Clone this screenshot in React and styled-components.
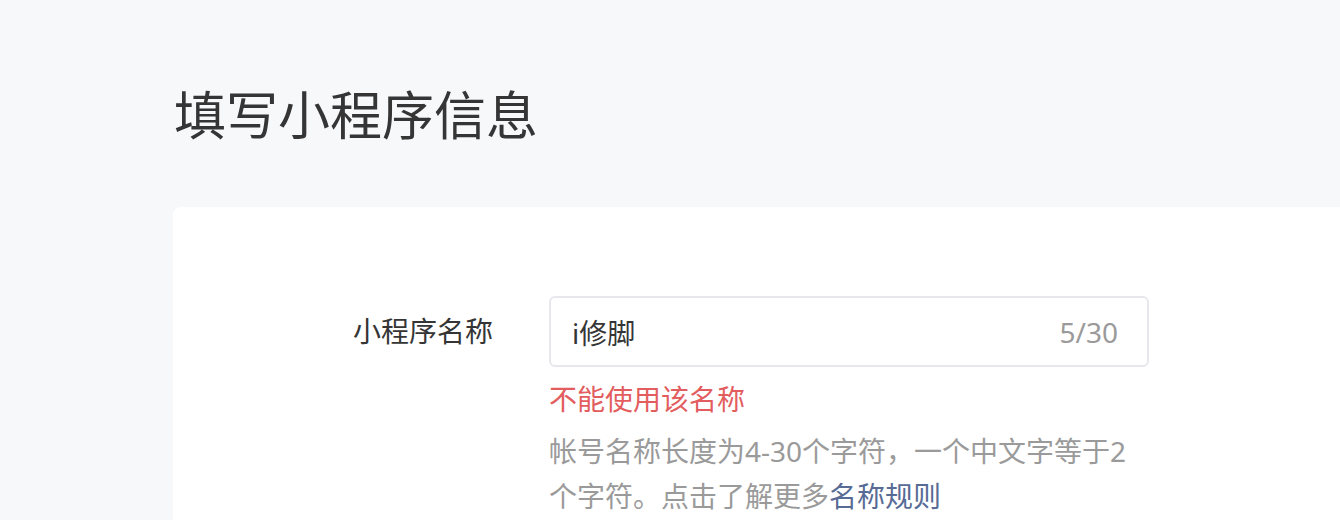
import styled, { createGlobalStyle } from 'styled-components';

const GlobalStyle = createGlobalStyle`
  html, body {
    margin: 0;
    padding: 0;
    background: #f7f8fa;
    overflow: hidden;
  }
  body {
    font-family: "Noto Sans", "Noto Sans CJK SC", sans-serif;
    color: #353535;
  }
`;

const Page = styled.div`
  padding-left: 173px;
  min-height: 520px;
`;

const Title = styled.h1`
  margin: 0;
  padding: 89px 0 0 1px;
  font-size: 52px;
  font-weight: 400;
  line-height: 52px;
  color: #353535;
`;

const Card = styled.section`
  margin-top: 66px;
  width: 1300px;
  min-height: 400px;
  background: #fff;
  border-radius: 8px 0 0 0;
  padding-top: 89px;
  box-sizing: border-box;
`;

const FormRow = styled.div`
  display: grid;
  grid-template-columns: 320px 600px;
  column-gap: 56px;
`;

const Label = styled.label`
  text-align: right;
  font-size: 28px;
  line-height: 71px;
  color: #353535;
`;

const Control = styled.div`
  display: flex;
  flex-direction: column;
`;

const InputBox = styled.div`
  height: 71px;
  box-sizing: border-box;
  border: 2px solid #e7e7ec;
  border-radius: 6px;
  display: flex;
  align-items: center;
  padding: 0 29px 0 21px;
`;

const Input = styled.input`
  flex: 1;
  border: none;
  outline: none;
  background: transparent;
  font: inherit;
  font-size: 28px;
  color: #353535;
  padding: 0;
`;

const Counter = styled.span`
  font-size: 28px;
  color: #9a9a9a;
`;

const Tip = styled.p`
  margin: ${(p) => p.$gap}px 0 0;
  font-size: 28px;
  line-height: 45px;
  color: ${(p) => (p.$error ? '#e35d5f' : '#9a9a9a')};
`;

const Link = styled.a`
  color: #576b95;
  text-decoration: none;
`;

export default function App() {
  const name = 'i修脚';
  return (
    <>
      <GlobalStyle />
      <Page>
        <Title>填写小程序信息</Title>
        <Card>
          <FormRow>
            <Label>小程序名称</Label>
            <Control>
              <InputBox>
                <Input defaultValue={name} />
                <Counter>5/30</Counter>
              </InputBox>
              <Tip $error $gap={10}>不能使用该名称</Tip>
              <Tip $gap={7}>
                帐号名称长度为4-30个字符，一个中文字等于2个字符。点击了解更多<Link href="#">名称规则</Link>
              </Tip>
            </Control>
          </FormRow>
        </Card>
      </Page>
    </>
  );
}
